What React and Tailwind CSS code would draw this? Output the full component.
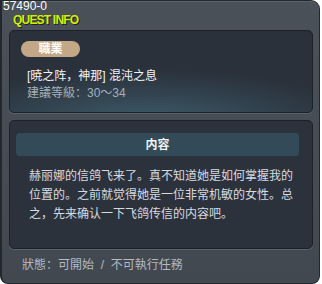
import React from "react";

const cjk = { fontFamily: '"Liberation Sans", "Noto Sans CJK SC", sans-serif' };

const App = () => {
  return (
    <div className="w-[322px] h-[284px] bg-white" style={cjk}>
      <div className="relative w-[320px] h-[284px] rounded-tr-[9px] rounded-b-[8px] border border-[#23282e] border-l-2 bg-gradient-to-b from-[#4a5159] to-[#41484f] shadow-[inset_0_1px_0_#5b636b]">
        <div className="absolute left-[1px] top-[-1px] text-[12px] leading-[13px] text-white">
          57490-0
        </div>
        <div className="absolute left-[11px] top-[13px] text-[12px] leading-[12px] font-bold tracking-[-0.8px] text-[#d4ee00] [text-shadow:1px_1px_0_#1e2326]">
          QUEST INFO
        </div>

        <div className="pt-[29px] pl-[7px]">
          <div className="w-[304px] h-[83px] rounded-[5px] border border-[#1d2228] shadow-[0_1px_0_#5a626b] bg-[radial-gradient(ellipse_90%_85%_at_45%_115%,#3f5e6b_0%,#32434f_45%,#2a313b_80%)] px-[11px] pt-[10px]">
            <div className="w-[59px] h-[16px] rounded-full bg-[#c2a886] flex items-center justify-center text-[12px] font-bold text-white">
              職業
            </div>
            <div className="mt-[11px] pl-[6px] text-[12px] leading-[17px] text-[#f2f4f6]">
              [暁之阵，神那] 混沌之息
            </div>
            <div className="pl-[6px] text-[12px] leading-[17px] text-[#a5afb9]">
              建議等級：30～34
            </div>
          </div>

          <div className="mt-[7px] w-[304px] h-[129px] rounded-[5px] border border-[#1d2228] shadow-[0_1px_0_#5a626b] bg-[#2c323c] pl-[6px] pt-[12px]">
            <div className="w-[283px] h-[23px] rounded-[4px] bg-[#334b59] flex items-center justify-center text-[12px] font-bold text-[#eef2f4]">
              内容
            </div>
            <div className="mt-[11px] pl-[13px] w-[284px] text-[12px] leading-[19px] text-[#d6dbe0]">
              赫丽娜的信鸽飞来了。真不知道她是如何掌握我的位置的。之前就觉得她是一位非常机敏的女性。总之，先来确认一下飞鸽传信的内容吧。
            </div>
          </div>

          <div className="mt-[8px] pl-[13px] text-[12px] leading-[16px] text-[#b3bac2]">
            狀態：可開始&nbsp;&nbsp;/&nbsp;&nbsp;不可執行任務
          </div>
        </div>
      </div>
    </div>
  );
};

export default App;
